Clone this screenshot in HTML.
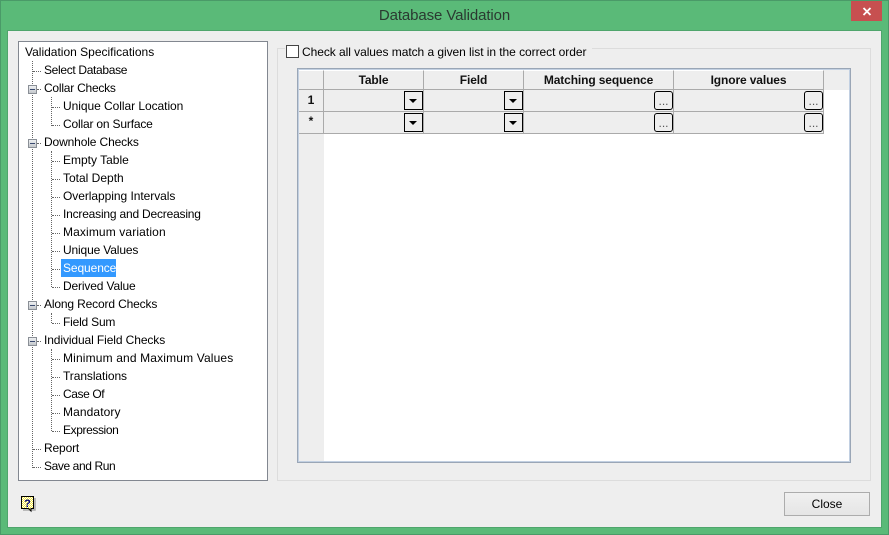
<!DOCTYPE html>
<html><head><meta charset="utf-8">
<style>
html,body{margin:0;padding:0;width:889px;height:535px;overflow:hidden;background:#5aba78;font-family:"Liberation Sans",sans-serif;font-size:12px;color:#000}
div{position:absolute;box-sizing:border-box}
.t{white-space:nowrap;line-height:18px;height:18px}
.v{border-left:1px dotted #666;width:1px}
.h{border-top:1px dotted #666;height:1px}
.m{width:9px;height:9px;background:linear-gradient(#eef0f2,#c4c8cc);border:1px solid #8a8f96}
.m:after{content:"";position:absolute;left:1px;top:3px;width:5px;height:1px;background:#3a4a70}
.hd{top:70px;height:20px;background:#eee;border-right:1px solid #aaa;border-bottom:1px solid #aaa;border-top:1px solid #fff;font-weight:bold;text-align:center;line-height:19px;color:#111;letter-spacing:-.12px}
.c{height:22px;background:#eee;border-right:1px solid #aaa;border-bottom:1px solid #aaa}
.dd{width:19px;height:19px;background:#eee;border:1px solid #000}
.dd:after{content:"";position:absolute;left:4px;top:7px;border-left:4.5px solid transparent;border-right:4.5px solid transparent;border-top:4.5px solid #000}
.el{width:19px;height:19px;background:#eee;border:1px solid #000;border-radius:3px;text-align:center;line-height:19px;color:#555}
</style></head><body>
<div style="left:0;top:0;width:889px;height:535px;border:1px solid #4a9a68"></div>
<div class="t" style="left:0;top:7px;width:889px;text-align:center;font-size:15px;color:#2b3a31;letter-spacing:-.1px">Database Validation</div>
<div style="left:851px;top:1px;width:31px;height:20px;background:#c75050"></div>
<svg style="position:absolute;left:862px;top:7px" width="10" height="9"><path d="M1.5 1 L8.5 8 M8.5 1 L1.5 8" stroke="#fff" stroke-width="1.8"/></svg>
<div style="left:7px;top:30px;width:875px;height:498px;background:#eee;border:1px solid #4fa56c"></div>

<!-- tree -->
<div style="left:18px;top:41px;width:250px;height:440px;background:#fff;border:1px solid #828790"></div>
<div class="v" style="left:32px;top:61px;height:407px"></div>
<div class="v" style="left:51px;top:97px;height:29px"></div>
<div class="v" style="left:51px;top:151px;height:136px"></div>
<div class="v" style="left:51px;top:313px;height:10px"></div>
<div class="v" style="left:51px;top:349px;height:82px"></div>

<div class="h" style="left:33px;top:71px;width:8px"></div>
<div class="h" style="left:37px;top:89px;width:4px"></div>
<div class="h" style="left:37px;top:143px;width:4px"></div>
<div class="h" style="left:37px;top:305px;width:4px"></div>
<div class="h" style="left:37px;top:341px;width:4px"></div>
<div class="h" style="left:33px;top:449px;width:8px"></div>
<div class="h" style="left:33px;top:467px;width:8px"></div>
<div class="h" style="left:52px;top:107px;width:8px"></div>
<div class="h" style="left:52px;top:125px;width:8px"></div>
<div class="h" style="left:52px;top:161px;width:8px"></div>
<div class="h" style="left:52px;top:179px;width:8px"></div>
<div class="h" style="left:52px;top:197px;width:8px"></div>
<div class="h" style="left:52px;top:215px;width:8px"></div>
<div class="h" style="left:52px;top:233px;width:8px"></div>
<div class="h" style="left:52px;top:251px;width:8px"></div>
<div class="h" style="left:52px;top:269px;width:8px"></div>
<div class="h" style="left:52px;top:287px;width:8px"></div>
<div class="h" style="left:52px;top:323px;width:8px"></div>
<div class="h" style="left:52px;top:359px;width:8px"></div>
<div class="h" style="left:52px;top:377px;width:8px"></div>
<div class="h" style="left:52px;top:395px;width:8px"></div>
<div class="h" style="left:52px;top:413px;width:8px"></div>
<div class="h" style="left:52px;top:431px;width:8px"></div>

<div class="m" style="left:28px;top:85px"></div>
<div class="m" style="left:28px;top:139px"></div>
<div class="m" style="left:28px;top:301px"></div>
<div class="m" style="left:28px;top:337px"></div>

<div class="t" style="left:25px;top:43px">Validation Specifications</div>
<div class="t" style="left:44px;top:61px;letter-spacing:-.33px">Select Database</div>
<div class="t" style="left:44px;top:79px;letter-spacing:-.23px">Collar Checks</div>
<div class="t" style="left:63px;top:97px;letter-spacing:-.05px">Unique Collar Location</div>
<div class="t" style="left:63px;top:115px;letter-spacing:-.18px">Collar on Surface</div>
<div class="t" style="left:44px;top:133px;letter-spacing:-.13px">Downhole Checks</div>
<div class="t" style="left:63px;top:151px">Empty Table</div>
<div class="t" style="left:63px;top:169px">Total Depth</div>
<div class="t" style="left:63px;top:187px;letter-spacing:-.05px">Overlapping Intervals</div>
<div class="t" style="left:63px;top:205px;letter-spacing:-.2px">Increasing and Decreasing</div>
<div class="t" style="left:63px;top:223px;letter-spacing:.12px">Maximum variation</div>
<div class="t" style="left:63px;top:241px;letter-spacing:-.15px">Unique Values</div>
<div style="left:61px;top:259px;width:55px;height:18px;background:#3399ff"></div>
<div class="t" style="left:63px;top:259px;color:#fff;letter-spacing:-.1px">Sequence</div>
<div class="t" style="left:63px;top:277px;letter-spacing:-.15px">Derived Value</div>
<div class="t" style="left:44px;top:295px;letter-spacing:-.15px">Along Record Checks</div>
<div class="t" style="left:63px;top:313px;letter-spacing:-.2px">Field Sum</div>
<div class="t" style="left:44px;top:331px;letter-spacing:-.1px">Individual Field Checks</div>
<div class="t" style="left:63px;top:349px;letter-spacing:.15px">Minimum and Maximum Values</div>
<div class="t" style="left:63px;top:367px;letter-spacing:-.08px">Translations</div>
<div class="t" style="left:63px;top:385px;letter-spacing:-.4px">Case Of</div>
<div class="t" style="left:63px;top:403px;letter-spacing:.1px">Mandatory</div>
<div class="t" style="left:63px;top:421px;letter-spacing:-.4px">Expression</div>
<div class="t" style="left:44px;top:439px;letter-spacing:-.15px">Report</div>
<div class="t" style="left:44px;top:457px;letter-spacing:-.4px">Save and Run</div>

<!-- group -->
<div style="left:277px;top:48px;width:594px;height:433px;border:1px solid #dcdcdc"></div>
<div style="left:285px;top:42px;width:307px;height:18px;background:#eee"></div>
<div style="left:286px;top:45px;width:13px;height:13px;background:#fff;border:1px solid #444"></div>
<div class="t" style="left:302px;top:43px;letter-spacing:-.055px">Check all values match a given list in the correct order</div>

<!-- grid -->
<div style="left:297px;top:68px;width:554px;height:395px;background:#fff;border:1px solid #9aa6b6;box-shadow:inset 0 0 0 1px #c2d0e2"></div>
<div style="left:299px;top:70px;width:25px;height:391px;background:#eee"></div>
<div style="left:299px;top:70px;width:550px;height:20px;background:#eee"></div>
<div class="hd" style="left:299px;width:25px"></div>
<div class="hd" style="left:324px;width:100px">Table</div>
<div class="hd" style="left:424px;width:100px">Field</div>
<div class="hd" style="left:524px;width:150px">Matching sequence</div>
<div class="hd" style="left:674px;width:150px">Ignore values</div>

<div class="c" style="left:299px;top:90px;width:25px;font-weight:bold;text-align:center;line-height:21px;color:#111">1</div>
<div class="c" style="left:299px;top:112px;width:25px;font-weight:bold;text-align:center;line-height:18px;color:#111">*</div>
<div class="c" style="left:324px;top:90px;width:100px"></div>
<div class="c" style="left:424px;top:90px;width:100px"></div>
<div class="c" style="left:524px;top:90px;width:150px"></div>
<div class="c" style="left:674px;top:90px;width:150px"></div>
<div class="c" style="left:324px;top:112px;width:100px"></div>
<div class="c" style="left:424px;top:112px;width:100px"></div>
<div class="c" style="left:524px;top:112px;width:150px"></div>
<div class="c" style="left:674px;top:112px;width:150px"></div>

<div class="dd" style="left:404px;top:91px"></div>
<div class="dd" style="left:504px;top:91px"></div>
<div class="dd" style="left:404px;top:113px"></div>
<div class="dd" style="left:504px;top:113px"></div>
<div class="el" style="left:654px;top:91px">...</div>
<div class="el" style="left:804px;top:91px">...</div>
<div class="el" style="left:654px;top:113px">...</div>
<div class="el" style="left:804px;top:113px">...</div>

<!-- help -->
<svg style="position:absolute;left:20px;top:495px" width="17" height="18">
<defs><pattern id="d" width="2" height="2" patternUnits="userSpaceOnUse"><rect width="2" height="2" fill="#fff"/><rect width="1" height="1" fill="#f4e83c"/><rect x="1" y="1" width="1" height="1" fill="#f4e83c"/></pattern></defs>
<path d="M3 15 H15 V3" fill="none" stroke="#aaa" stroke-width="1.5"/>
<path d="M1.5 1.5 H13.5 V13.5 H11 V16 L8.5 13.5 H1.5 Z" fill="url(#d)" stroke="#000" stroke-width="1"/>
<text x="7.5" y="12" text-anchor="middle" font-family="Liberation Sans" font-size="11" font-weight="bold" fill="#000080">?</text>
</svg>

<!-- close -->
<div style="left:784px;top:492px;width:86px;height:24px;border:1px solid #acacac;background:linear-gradient(#f0f0f0,#e5e5e5);text-align:center;line-height:22px">Close</div>
</body></html>
